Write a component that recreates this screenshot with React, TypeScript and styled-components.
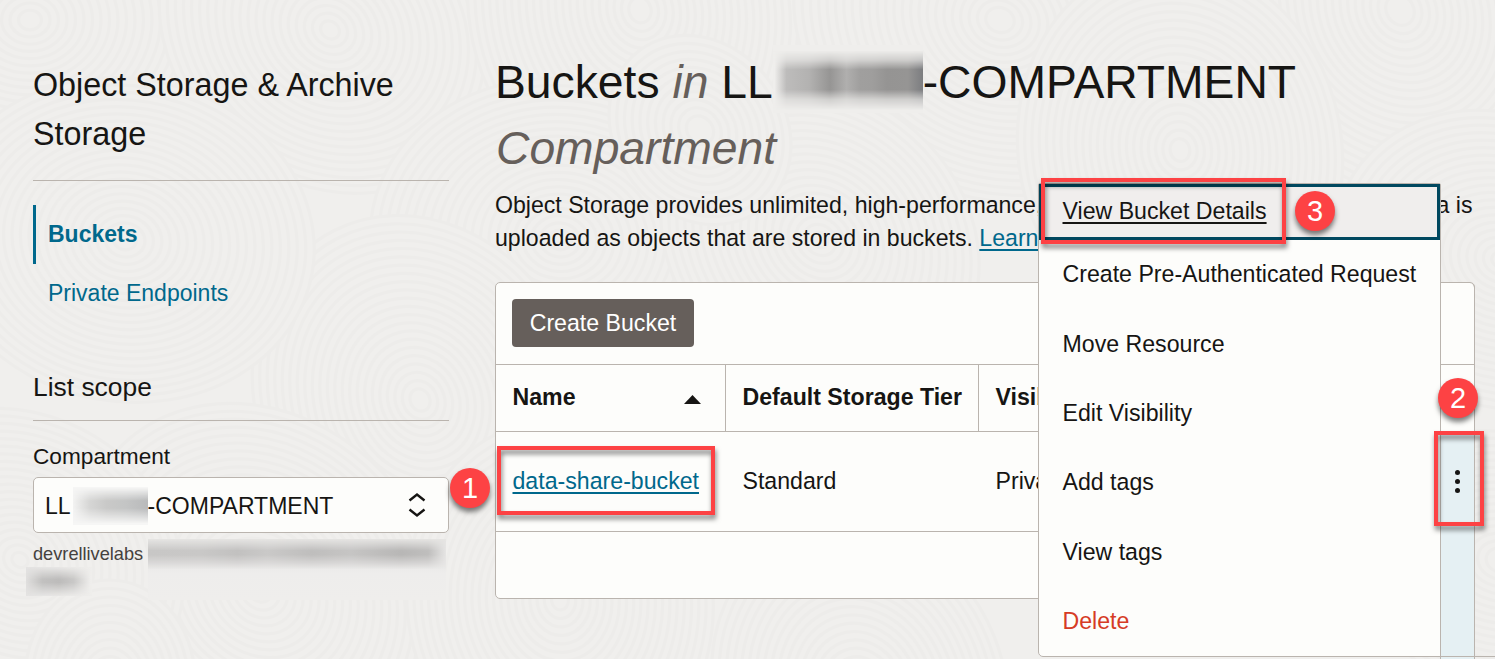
import React from "react";
import styled, { createGlobalStyle } from "styled-components";

const GlobalStyle = createGlobalStyle`
  *, *::before, *::after { box-sizing: border-box; }
  html, body { margin: 0; padding: 0; }
  body { background: #f0efed; overflow: hidden; }
`;

const ink = "#161513";
const teal = "#00688c";
const line = "#bab4ae";
const paper = "#fdfdfb";
const red = "#fd4244";

const Page = styled.div`
  position: relative;
  display: flex;
  gap: 46px;
  width: 1495px;
  height: 659px;
  padding-left: 33px;
  overflow: hidden;
  background: #f0efed;
  color: ${ink};
  font-family: "Liberation Sans", Arial, sans-serif;
  font-size: 23.15px;
`;

const Texture = styled.svg`
  position: absolute;
  inset: 0;
`;

const Sidebar = styled.aside`
  position: relative;
  display: flex;
  flex-direction: column;
  width: 416px;
  flex: none;
`;

const ServiceTitle = styled.h2`
  margin: 0;
  height: 181px;
  padding-top: 61px;
  font-size: 32.3px;
  font-weight: 400;
  line-height: 49px;
  border-bottom: 1px solid ${line};
`;

const Nav = styled.nav`
  display: flex;
  flex-direction: column;
  padding: 24px 0 47px;
`;

const NavLink = styled.a<{ $active?: boolean }>`
  display: flex;
  align-items: center;
  height: 59px;
  padding-left: 12px;
  border-left: 3px solid ${(p) => (p.$active ? teal : "transparent")};
  color: ${teal};
  font-size: 23px;
  font-weight: ${(p) => (p.$active ? 700 : 400)};
`;

const ScopeTitle = styled.h3`
  display: flex;
  align-items: center;
  margin: 0;
  height: 51px;
  padding-bottom: 15px;
  font-size: 26.4px;
  font-weight: 400;
  border-bottom: 1px solid ${line};
`;

const Label = styled.label`
  height: 56px;
  padding-top: 21px;
  font-size: 22.65px;
  line-height: 28px;
`;

const Select = styled.div`
  display: flex;
  align-items: center;
  height: 56px;
  padding: 0 21px 0 11px;
  background: ${paper};
  border: 1px solid ${line};
  border-radius: 5px;
  font-size: 23px;
`;

const SelectText = styled.span`
  display: flex;
  align-items: center;
  flex: 1;
  padding-top: 2px;
`;

const Path = styled.div`
  display: flex;
  height: 34px;
  padding-top: 6px;
  font-size: 18.2px;
  line-height: 30px;
  color: #45413e;
`;

const PathName = styled.span`
  width: 115px;
`;

/* Opaque patch that hides part of an identifier behind a soft stain. */
const Redaction = styled.span<{ $w: number; $h: number; $bg: string }>`
  display: inline-block;
  flex: none;
  width: ${(p) => p.$w}px;
  height: ${(p) => p.$h}px;
  background: ${(p) => p.$bg};
`;

const Stain = styled.i<{ $ink: string; $fade: string }>`
  display: block;
  height: 100%;
  background: linear-gradient(90deg, ${(p) => p.$ink});
  mask-image: linear-gradient(${(p) => p.$fade});
`;

const TitleRedaction = styled(Redaction)`
  vertical-align: middle;
  margin: -16px 0 -2px;
`;

const SelectRedaction = styled(Redaction)`
  margin-left: 2px;
`;

const WrappedRedaction = styled(Redaction)`
  margin-left: -7px;
`;

const Main = styled.main`
  position: relative;
  display: flex;
  flex-direction: column;
  width: 980px;
  padding-top: 49px;
  flex: none;
`;

const Title = styled.h1`
  margin: 0;
  height: 140px;
  font-size: 46.25px;
  font-weight: 400;
  line-height: 66px;
  white-space: nowrap;
  em { color: #665f5b; }
`;

const TitleKind = styled.em`
  padding-left: 1px;
`;

const Intro = styled.p`
  margin: 0;
  height: 93px;
  font-size: 23.11px;
  line-height: 33px;
  white-space: nowrap;
`;

const Link = styled.a`
  color: ${teal};
  text-decoration: underline;
  text-decoration-thickness: 2px;
  text-underline-offset: 3px;
`;

const Panel = styled.section`
  display: flex;
  height: 317px;
  background: ${paper};
  border: 1px solid ${line};
  border-radius: 5px;
`;

const Table = styled.div`
  display: flex;
  flex-direction: column;
  flex: 1;
`;

const Toolbar = styled.div`
  height: 82px;
  padding: 16px;
  border-bottom: 1px solid ${line};
`;

const Button = styled.button`
  width: 182px;
  height: 48px;
  padding: 0;
  border: 0;
  border-radius: 4px;
  background: #665f5b;
  color: #fff;
  font: inherit;
`;

const Row = styled.div<{ $head?: boolean }>`
  display: grid;
  grid-template-columns: 230px 253px 1fr;
  height: ${(p) => (p.$head ? 67 : 100)}px;
  border-bottom: 1px solid ${line};
  font-weight: ${(p) => (p.$head ? 700 : 400)};
`;

const Cell = styled.div<{ $rule?: boolean }>`
  display: flex;
  align-items: center;
  justify-content: space-between;
  padding: 0 24px ${(p) => (p.$rule ? 2 : 0)}px 16.5px;
  white-space: nowrap;
  border-right: 1px solid ${(p) => (p.$rule ? line : "transparent")};
`;

const TierCell = styled(Cell)`
  padding-right: 0;
`;

const VisibilityHead = styled(Cell)`
  padding-bottom: 2px;
`;

const SortArrow = styled.svg`
  margin-top: 5px;
`;

const ActionColumn = styled.div`
  display: flex;
  flex-direction: column;
  width: 35px;
  height: 376px;
  margin-right: -1px;
  border: solid ${line};
  border-width: 0 1px;
  border-top-right-radius: 5px;
`;

const ActionHead = styled.div`
  height: 82px;
  flex: none;
  border-bottom: 1px solid ${line};
`;

const ActionFill = styled.div`
  display: flex;
  flex-direction: column;
  align-items: center;
  gap: 4px;
  margin-top: 67px;
  flex: 1;
  padding-top: 38px;
  background: #e5f0f3;
`;

const Dot = styled.span`
  width: 5px;
  height: 5px;
  border-radius: 50%;
  background: ${ink};
`;

const MenuEdge = styled.div`
  position: absolute;
  right: 0;
  bottom: 2px;
  width: 65px;
  height: 1px;
  background: ${line};
`;

const Menu = styled.ul`
  position: absolute;
  left: 1038px;
  top: 183px;
  display: flex;
  flex-direction: column;
  width: 403px;
  height: 474px;
  margin: 0;
  padding: 0;
  list-style: none;
  background: ${paper};
  border: 1px solid ${line};
  border-radius: 2px 2px 0 5px;
`;

const MenuItem = styled.li<{ $danger?: boolean }>`
  display: flex;
  align-items: center;
  height: 69.35px;
  flex: none;
  padding-left: 23.5px;
  color: ${(p) => (p.$danger ? "#d63b25" : ink)};
`;

const FocusedItem = styled(MenuItem)`
  height: 56px;
  padding-left: 20.5px;
  padding-bottom: 2px;
  background: #f0eeed;
  border: 3px solid #00485f;
  text-decoration: underline;
  text-decoration-thickness: 2px;
  text-underline-offset: 3px;
`;

const Frame = styled.div<{ $x: number; $y: number; $w: number; $h: number }>`
  position: absolute;
  left: ${(p) => p.$x}px;
  top: ${(p) => p.$y}px;
  width: ${(p) => p.$w}px;
  height: ${(p) => p.$h}px;
  border: 4px solid ${red};
  filter: drop-shadow(1px 4px 2.5px rgba(0, 0, 0, 0.5));
`;

const Badge = styled.div<{ $x: number; $y: number }>`
  position: absolute;
  left: ${(p) => p.$x}px;
  top: ${(p) => p.$y}px;
  display: flex;
  align-items: center;
  justify-content: center;
  width: 40px;
  height: 40px;
  border-radius: 50%;
  background: ${red};
  color: #fff;
  font-size: 29px;
  line-height: 40px;
  box-shadow: 0 4px 5px rgba(0, 0, 0, 0.5);
`;

const swirls = [
  [30, 20, 190], [330, 30, 180], [640, 10, 200], [1000, 20, 210], [1400, 10, 220],
  [560, 240, 190], [820, 240, 170], [1180, 150, 190], [1500, 260, 170],
  [420, 400, 190], [125, 240, 190], [260, 590, 200], [560, 600, 180], [20, 560, 170],
  [860, 690, 170], [1500, 560, 150], [700, 130, 100], [110, 680, 100],
];

const Background = () => (
  <Texture width="1495" height="659" viewBox="0 0 1495 659" aria-hidden="true">
    {swirls.map(([x, y, r], s) => (
      <g key={s} transform={`rotate(${(s * 37) % 90} ${x} ${y})`}>
        {Array.from({ length: Math.floor(r / 8.5) }, (_, i) => (
          <ellipse
            key={i}
            cx={x}
            cy={y}
            rx={r - i * 8.5}
            ry={(r - i * 8.5) * 0.85}
            fill="#f0efed"
            stroke="#edecea"
            strokeWidth="3.2"
          />
        ))}
      </g>
    ))}
  </Texture>
);

const items = ["Create Pre-Authenticated Request", "Move Resource", "Edit Visibility", "Add tags", "View tags"];

export default function App() {
  return (
    <Page>
      <GlobalStyle />
      <Background />
      <Sidebar>
        <ServiceTitle>Object Storage &amp; Archive<br />Storage</ServiceTitle>
        <Nav>
          <NavLink $active>Buckets</NavLink>
          <NavLink>Private Endpoints</NavLink>
        </Nav>
        <ScopeTitle>List scope</ScopeTitle>
        <Label>Compartment</Label>
        <Select>
          <SelectText>
            LL
            <SelectRedaction $w={75} $h={38} $bg="#f6f6f5">
              <Stain
                $ink="#f3f3f2 0, #d6d6d5 22%, #c9c9c8 45%, #c4c5c5 70%, #b9babb 100%"
                $fade="transparent 2%, #000 36%, #000 56%, transparent 96%"
              />
            </SelectRedaction>
            -COMPARTMENT
          </SelectText>
          <svg width="20" height="28" viewBox="0 0 20 28" fill="none" stroke={ink} strokeWidth="2.4">
            <path d="M2.500 9.500 10 3.500l7.500 6M2.500 18.500 10 24.500l7.500-6" />
          </svg>
        </Select>
        <Path>
          <PathName>devrellivelabs</PathName>
          <Redaction $w={298} $h={61} $bg="linear-gradient(#e6e5e3 0, #e8e7e6 22px, #eeedec 34px, #efeeec 60px)">
            <Stain
              $ink="#c8c7c6 0, #c9c8c7 18%, #c2c1c0 30%, #cac9c8 40%, #bfbebd 55%, #c6c5c4 68%, #b8b7b6 85%, #bfbebd 94%, #e6e5e4 100%"
              $fade="transparent 0, #000 19%, #000 26%, transparent 50%"
            />
          </Redaction>
        </Path>
        <WrappedRedaction $w={66} $h={29} $bg="linear-gradient(90deg, #e4e3e2, #efeeec)">
          <Stain
            $ink="#e0dfde 0, #c2c1c0 25%, #bdbcbb 50%, #c9c8c7 72%, #efeeec 98%"
            $fade="transparent 0, #000 42%, #000 54%, transparent 100%"
          />
        </WrappedRedaction>
      </Sidebar>
      <Main>
        <Title>
          Buckets <em>in</em> LL
          <TitleRedaction $w={150} $h={68} $bg="#efeeec">
            <Stain
              $ink="#efeeec 1%, #bdbcbb 9%, #b3b2b1 24%, #969594 38%, #b0afae 49%, #a09f9e 58%, #9f9e9d 66%, #959493 76%, #969594 90%, #7c7d80 100%"
              $fade="transparent 8%, rgba(0,0,0,.35) 22%, #000 36%, #000 66%, rgba(0,0,0,.35) 80%, transparent 96%"
            />
          </TitleRedaction>
          -COMPARTMENT
          <br />
          <TitleKind>Compartment</TitleKind>
        </Title>
        <Intro>
          Object Storage provides unlimited, high-performance, durable, and secure data storage. Data is
          <br />
          uploaded as objects that are stored in buckets. <Link>Learn more</Link>
        </Intro>
        <Panel>
          <Table>
            <Toolbar><Button>Create Bucket</Button></Toolbar>
            <Row $head>
              <Cell $rule>
                Name
                <SortArrow width="17" height="9" viewBox="0 0 17 9"><path d="M0 9 8.500 0 17 9Z" fill={ink} /></SortArrow>
              </Cell>
              <TierCell $rule>Default Storage Tier</TierCell>
              <VisibilityHead>Visibility</VisibilityHead>
            </Row>
            <Row>
              <Cell><Link>data-share-bucket</Link></Cell>
              <Cell>Standard</Cell>
              <Cell>Private</Cell>
            </Row>
          </Table>
          <ActionColumn>
            <ActionHead />
            <ActionFill><Dot /><Dot /><Dot /></ActionFill>
          </ActionColumn>
        </Panel>
      </Main>
      <Menu>
        <FocusedItem>View Bucket Details</FocusedItem>
        {items.map((t) => <MenuItem key={t}>{t}</MenuItem>)}
        <MenuItem $danger>Delete</MenuItem>
      </Menu>
      <MenuEdge />
      <Frame $x={497} $y={446} $w={218} $h={69} />
      <Frame $x={1434} $y={431} $w={50} $h={95} />
      <Frame $x={1041} $y={178} $w={245} $h={66} />
      <Badge $x={450} $y={468}>1</Badge>
      <Badge $x={1438} $y={378}>2</Badge>
      <Badge $x={1295} $y={191}>3</Badge>
    </Page>
  );
}
